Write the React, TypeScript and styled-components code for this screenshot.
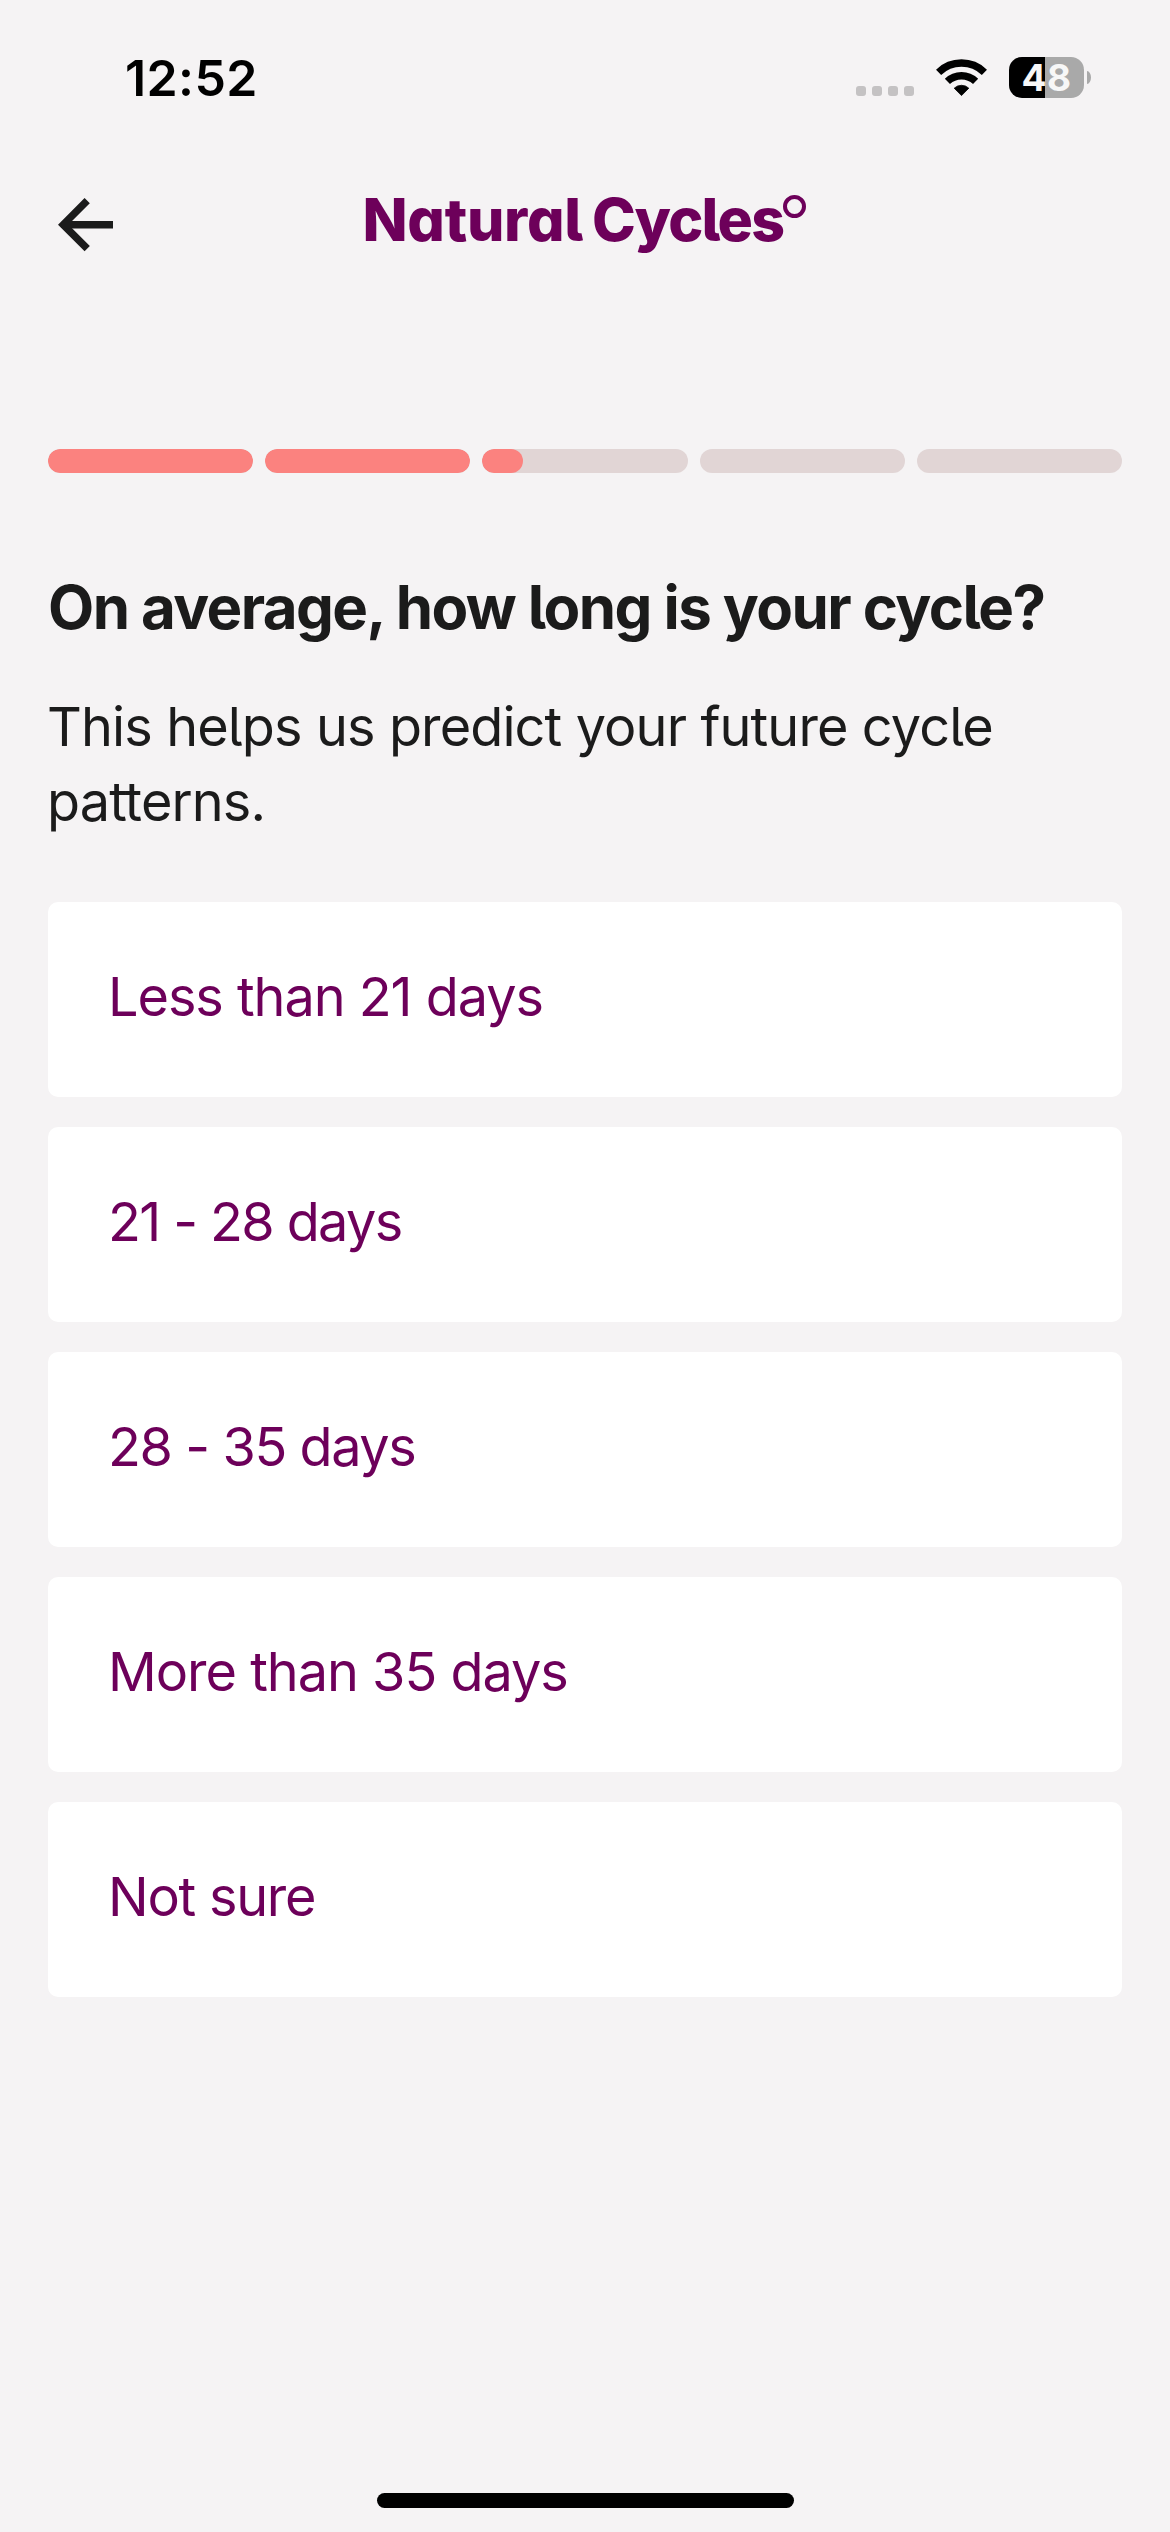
import React from 'react';
import styled, { createGlobalStyle } from 'styled-components';

const color = {
  background: '#f5f3f4',
  surface: '#ffffff',
  ink: '#1b1b1b',
  brand: '#6d005a',
  accent: '#fb827f',
  track: '#e1d5d5',
};

const GlobalStyle = createGlobalStyle`
  *, *::before, *::after { box-sizing: border-box; }
  body {
    margin: 0;
    background: ${color.background};
    font-family: Inter, 'Liberation Sans', sans-serif;
    -webkit-font-smoothing: antialiased;
  }
`;

const Screen = styled.div`
  display: flex;
  flex-direction: column;
  width: 1170px;
  height: 2532px;
  background: ${color.background};
  color: ${color.ink};
  overflow: hidden;
`;

/* ---------- status bar ---------- */

const StatusBar = styled.div`
  display: flex;
  justify-content: space-between;
  align-items: flex-start;
  height: 141px;
  padding: 48px 79px 0 125px;
`;

const Clock = styled.time`
  font-size: 50px;
  line-height: 60px;
  font-weight: 600;
  letter-spacing: 0.4px;
  color: #000;
`;

const StatusIcons = styled.div`
  display: flex;
  align-items: center;
  gap: 22px;
  height: 59px;
`;

const SignalDots = styled.div`
  display: flex;
  align-items: flex-end;
  gap: 6px;
  height: 37px;
`;

const SignalDot = styled.span`
  width: 10px;
  height: 10px;
  border-radius: 3px;
  background: #c4c2c3;
`;

const WifiIcon = styled.svg`
  display: block;
  width: 51px;
  height: 38px;
`;

const Battery = styled.div`
  display: flex;
  align-items: center;
  gap: 3px;
`;

const BatteryBody = styled.div<{ $level: number }>`
  display: flex;
  align-items: center;
  justify-content: center;
  width: 75px;
  height: 41px;
  border-radius: 13px;
  background: linear-gradient(
    to right,
    #000 ${(p) => p.$level}%,
    #a9a9a9 ${(p) => p.$level}%
  );
  color: #f7f7f7;
  font-size: 37px;
  line-height: 41px;
  font-weight: 700;
  letter-spacing: 0.5px;
`;

const BatteryTip = styled.span`
  width: 4px;
  height: 13px;
  border-radius: 0 4px 4px 0 / 0 6.5px 6.5px 0;
  background: #a9a9a9;
`;

/* ---------- header ---------- */

const Header = styled.header`
  display: grid;
  grid-template-columns: 304.5px auto 1fr;
  align-items: start;
  height: 308px;
  padding: 38.5px 48px 0 58px;
`;

const BackButton = styled.button`
  display: flex;
  width: 56px;
  height: 54px;
  margin-top: 18px;
  padding: 0;
  border: 0;
  background: none;
`;

const Logo = styled.div`
  display: flex;
  align-items: flex-start;
  color: ${color.brand};
  font-size: 59px;
  line-height: 80px;
  font-weight: 800;
  font-feature-settings: 'cv11', 'cv05';
`;

const LogoWord = styled.span<{ $tracking: number }>`
  letter-spacing: ${(p) => p.$tracking}px;

  & + & {
    margin-left: 9px;
  }
`;

const LogoDegree = styled.span`
  width: 23px;
  height: 23px;
  margin-top: 15px;
  border: 4.5px solid ${color.brand};
  border-radius: 50%;
`;

/* ---------- question ---------- */

const Content = styled.main`
  display: flex;
  flex: 1;
  flex-direction: column;
  padding: 0 48px;
`;

const Progress = styled.div`
  display: grid;
  grid-template-columns: repeat(5, 1fr);
  gap: 12px;
`;

const ProgressSegment = styled.div`
  height: 24px;
  border-radius: 12px;
  background: ${color.track};
  overflow: hidden;
`;

const ProgressFill = styled.div<{ $percent: number }>`
  width: ${(p) => p.$percent}%;
  height: 100%;
  border-radius: 12px;
  background: ${color.accent};
`;

const Question = styled.h1`
  margin: 97px 0 0;
  font-size: 60px;
  line-height: 75px;
  font-weight: 700;
  letter-spacing: -1.59px;
  font-feature-settings: 'cv05';
  white-space: nowrap;
`;

const Hint = styled.p`
  margin: 44px 0 0 -1px;
  font-size: 54px;
  line-height: 75px;
  letter-spacing: -0.88px;
  font-feature-settings: 'cv05';
`;

const Options = styled.div`
  display: flex;
  flex-direction: column;
  gap: 30px;
  margin-top: 63px;
`;

const Option = styled.button<{ $tracking: number }>`
  display: flex;
  align-items: flex-start;
  height: 195px;
  padding: 57px 60px 0;
  border: 0;
  border-radius: 10px;
  background: ${color.surface};
  color: ${color.brand};
  font-family: inherit;
  font-size: 54px;
  line-height: 75px;
  letter-spacing: ${(p) => p.$tracking}px;
  text-align: left;
`;

const HomeArea = styled.footer`
  display: flex;
  justify-content: center;
  padding-bottom: 24px;
`;

const HomeIndicator = styled.span`
  width: 417px;
  height: 15px;
  border-radius: 8px;
  background: #000;
`;

const progress = [100, 100, 20, 0, 0];

const options = [
  { label: 'Less than 21 days', tracking: -1.05 },
  { label: '21 - 28 days', tracking: -1.62 },
  { label: '28 - 35 days', tracking: -1.42 },
  { label: 'More than 35 days', tracking: -1.02 },
  { label: 'Not sure', tracking: -1.25 },
];

export default function App() {
  return (
    <Screen>
      <GlobalStyle />
      <StatusBar>
        <Clock>12:52</Clock>
        <StatusIcons>
          <SignalDots>
            <SignalDot />
            <SignalDot />
            <SignalDot />
            <SignalDot />
          </SignalDots>
          <WifiIcon viewBox="0 0 51 38" fill="none" stroke="#000" strokeWidth="7.4">
            <path d="M2.6 13.3A33 33 0 0 1 48.4 13.3" />
            <path d="M11.4 22.4A20.3 20.3 0 0 1 39.6 22.4" />
            <path d="M25.5 36.6L18.2 29.2A10.6 10.6 0 0 1 32.8 29.2Z" fill="#000" stroke="#000" strokeWidth="0.8" strokeLinejoin="round" />
          </WifiIcon>
          <Battery>
            <BatteryBody $level={48}>48</BatteryBody>
            <BatteryTip />
          </Battery>
        </StatusIcons>
      </StatusBar>

      <Header>
        <BackButton aria-label="Back">
          <svg width="56" height="54" viewBox="0 0 56 54" fill="none" stroke={color.ink} strokeWidth="7.4">
            <path d="M29.2 2.7L5.2 26.7L29.2 50.7" />
            <path d="M6 26.7H55" />
          </svg>
        </BackButton>
        <Logo>
          <LogoWord $tracking={-0.3}>Natural</LogoWord>
          <LogoWord $tracking={-1.8}>Cycles</LogoWord>
          <LogoDegree />
        </Logo>
      </Header>

      <Content>
        <Progress>
          {progress.map((percent, i) => (
            <ProgressSegment key={i}>
              <ProgressFill $percent={percent} />
            </ProgressSegment>
          ))}
        </Progress>
        <Question>On average, how long is your cycle?</Question>
        <Hint>This helps us predict your future cycle patterns.</Hint>
        <Options>
          {options.map((option) => (
            <Option key={option.label} $tracking={option.tracking}>
              {option.label}
            </Option>
          ))}
        </Options>
      </Content>

      <HomeArea>
        <HomeIndicator />
      </HomeArea>
    </Screen>
  );
}
